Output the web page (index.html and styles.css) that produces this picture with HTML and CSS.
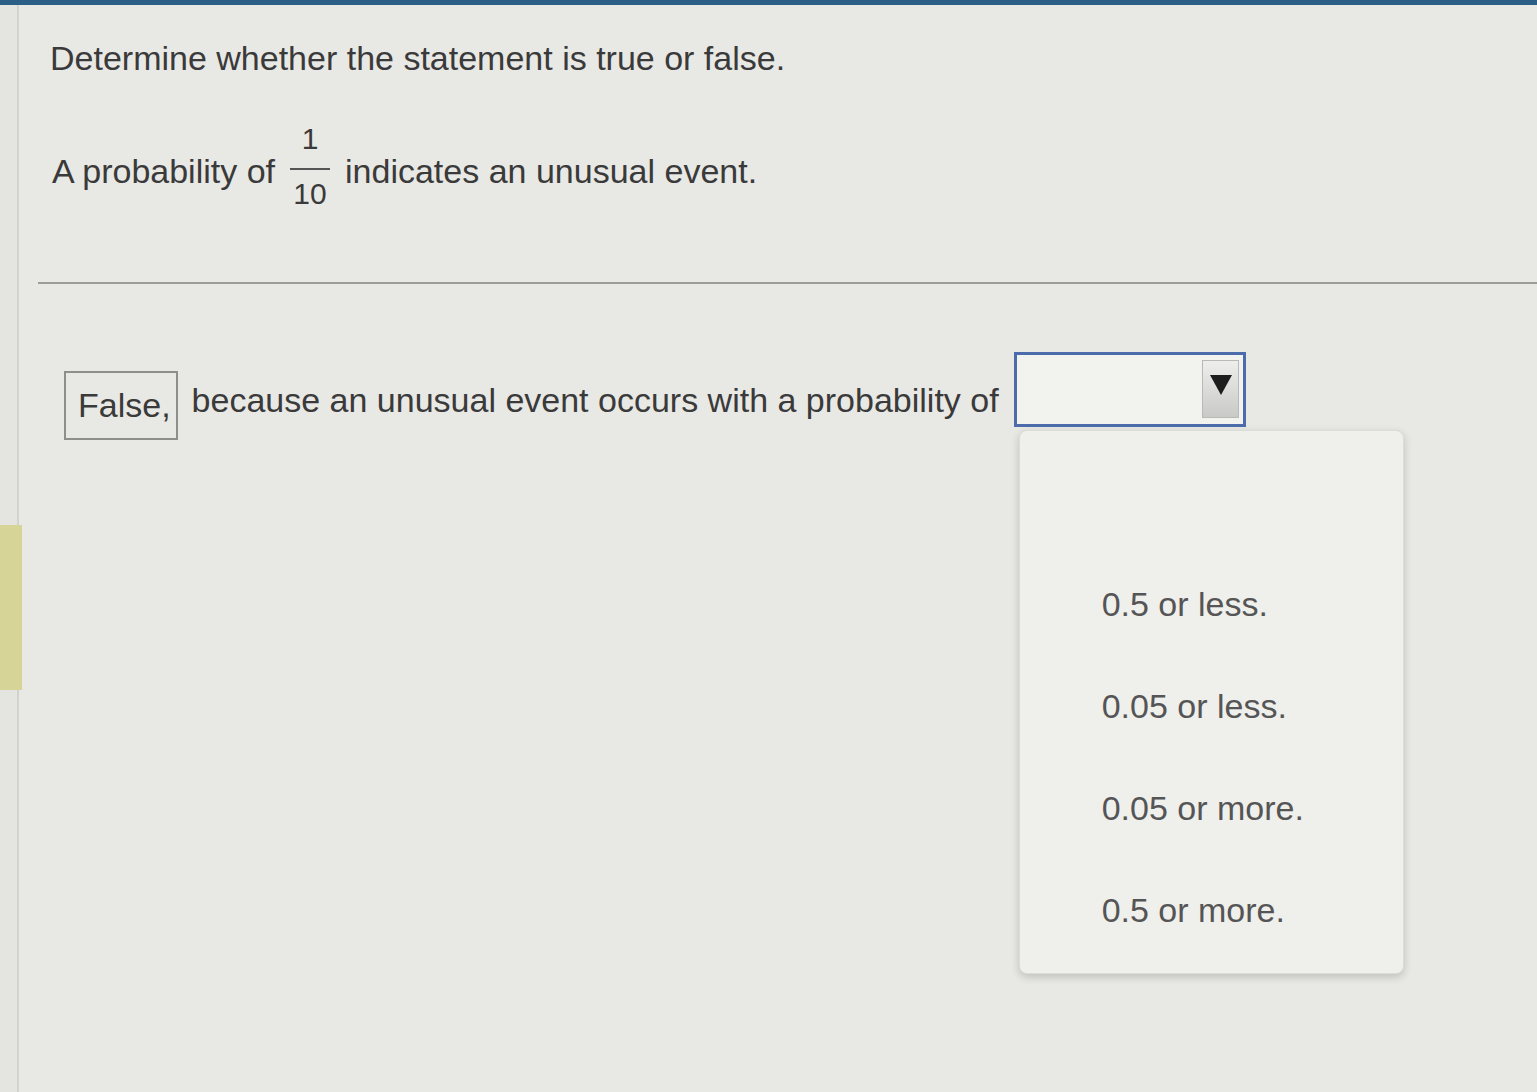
FILE: index.html
```html
<!DOCTYPE html>
<html lang="en">
<head>
    <meta charset="UTF-8">
    <meta name="viewport" content="width=device-width, initial-scale=1.0">
    <title>Determine whether the statement is true or false</title>
    <link rel="stylesheet" href="styles.css">
</head>
<body>

<div class="topbar"></div>

<div class="page">
    <!-- left gutter with the yellow progress mark -->
    <div class="gutter">
        <div class="mark"></div>
    </div>

    <main class="question">
        <p class="prompt">Determine whether the statement is true or false.</p>

        <p class="statement">
            <span>A probability of</span>
            <span class="frac"><span class="num">1</span><span class="den">10</span></span>
            <span>indicates an unusual event.</span>
        </p>

        <hr class="divider">

        <div class="answer">
            <span class="choice">False,</span>
            <span class="answer-text">because an unusual event occurs with a probability of</span>
            <span class="select">
                <span class="arrow"></span>
                <!-- open dropdown list -->
                <ul class="menu">
                    <li>&nbsp;</li>
                    <li>0.5 or less.</li>
                    <li>0.05 or less.</li>
                    <li>0.05 or more.</li>
                    <li>0.5 or more.</li>
                </ul>
            </span>
        </div>
    </main>
</div>

</body>
</html>
```

FILE: styles.css
```css
body {
    margin: 0;
    font-family: "Liberation Sans", Arial, sans-serif;
    background-color: #e8e8e5;
    color: #3a3a3a;
    height: 1092px;
    overflow: hidden;
}
.topbar {
    height: 5px;
    background-color: #2b5f86;
}
.page {
    display: flex;
    height: 1087px;
}
.gutter {
    width: 17px;
    border-right: 2px solid #d2d2ce;
    background-color: #e4e4e1;
    flex-shrink: 0;
}
.mark {
    margin-top: 520px;
    height: 165px;
    width: 22px;
    margin-right: -5px;
    background-color: #d6d597;
    position: relative;
}
.question {
    flex: 1;
    padding-left: 31px;
}
.prompt {
    margin: 33px 0 0;
    font-size: 34px;
    line-height: 40px;
}
.statement {
    margin: 50px 0 0 2px;
    font-size: 34px;
    line-height: 40px;
    display: flex;
    align-items: center;
    gap: 15px;
}
.frac {
    display: inline-flex;
    flex-direction: column;
    align-items: center;
    font-size: 30px;
    line-height: 30px;
    margin: -4px 0 4px;
}
.num {
    border-bottom: 2px solid #555;
    padding-bottom: 14px;
    width: 40px;
    text-align: center;
}
.den {
    padding-top: 9px;
}
.divider {
    margin: 69px 0 0 -12px;
    border: none;
    border-top: 2px solid #9c9c9a;
}
.answer {
    margin-top: 68px;
    margin-left: 14px;
    display: flex;
    align-items: flex-start;
    font-size: 34px;
}
.choice {
    margin-top: 19px;
    border: 2px solid #8e8e8c;
    padding: 14px 5px 14px 12px;
    line-height: 37px;
}
.answer-text {
    margin: 28px 15px 0 14px;
    line-height: 40px;
}
.select {
    position: relative;
    width: 226px;
    height: 69px;
    border: 3px solid #4d6cab;
    background-color: #f2f2ef;
}
.arrow {
    position: absolute;
    right: 4px;
    top: 5px;
    width: 37px;
    height: 58px;
    background: linear-gradient(#eeeeec, #c9c9c7);
    border: 1px solid #b9b9b7;
    box-sizing: border-box;
}
.arrow::after {
    content: "";
    position: absolute;
    left: 7px;
    top: 14px;
    border-left: 11px solid transparent;
    border-right: 11px solid transparent;
    border-top: 20px solid #1d1d1d;
}
.menu {
    position: absolute;
    left: 2px;
    top: 75px;
    width: 385px;
    margin: 0;
    padding: 20px 0 12px;
    list-style: none;
    background-color: #efefec;
    border: 1px solid #dcdcd8;
    border-radius: 8px;
    box-shadow: 0 3px 8px rgba(0, 0, 0, 0.18);
    box-sizing: border-box;
}
.menu li {
    height: 102px;
    line-height: 102px;
    padding-left: 82px;
    font-size: 34px;
    color: #555;
}
```
